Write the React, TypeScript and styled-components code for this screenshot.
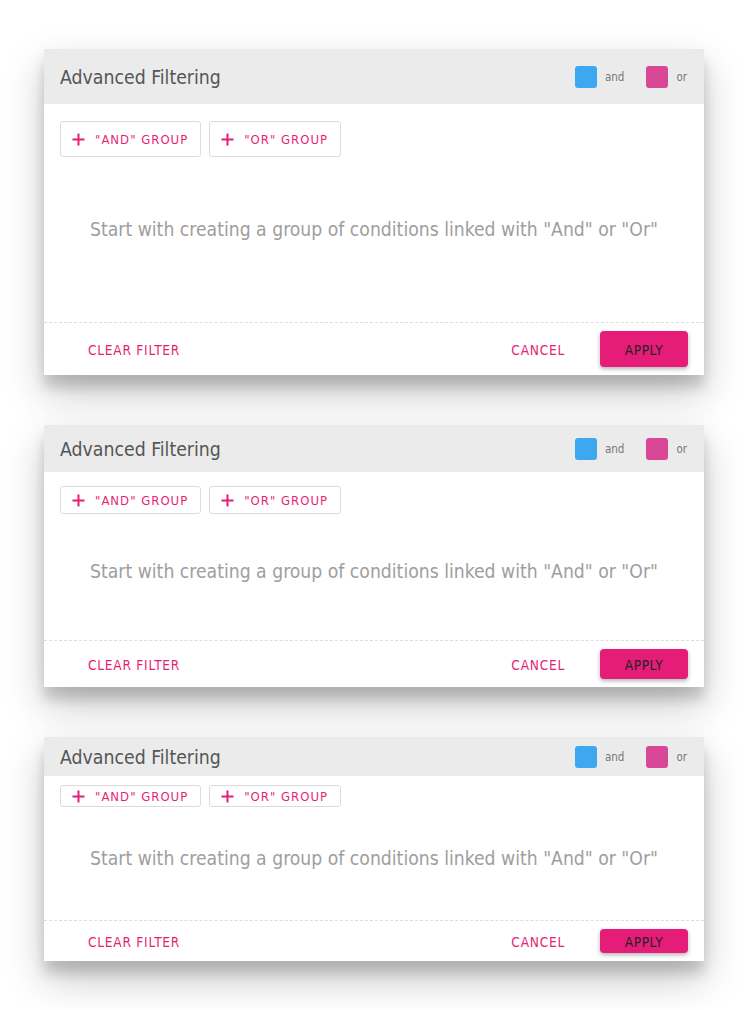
import React from "react";
import styled, { createGlobalStyle, css } from "styled-components";

const Global = createGlobalStyle`
  html, body { margin: 0; padding: 0; background: #ffffff; }
  body { font-family: "DejaVu Sans Condensed", "Liberation Sans", sans-serif; }
  * { box-sizing: border-box; }
`;

type Size = "lg" | "md" | "sm";

const sizes = {
  lg: { header: 55, btn: 36, bodyPad: 17, msgTop: 61, msgBottom: 80, footer: 53, apply: 36 },
  md: { header: 47, btn: 28, bodyPad: 14, msgTop: 46, msgBottom: 56, footer: 47, apply: 30 },
  sm: { header: 39, btn: 22, bodyPad: 9, msgTop: 40, msgBottom: 49, footer: 41, apply: 24 },
};

const Page = styled.div`
  display: flex;
  flex-direction: column;
  align-items: center;
  gap: 50px;
  padding: 49px 0 48px;
`;

const Card = styled.section`
  width: 660px;
  background: #fff;
  box-shadow: 0 18px 38px rgba(0, 0, 0, 0.22), 0 12px 12px rgba(0, 0, 0, 0.16);
`;

const Header = styled.header<{ $size: Size }>`
  height: ${(p) => sizes[p.$size].header}px;
  background: #ebebeb;
  display: flex;
  align-items: center;
  justify-content: space-between;
  padding: 1px 17px 0 16px;
`;

const Title = styled.h2`
  margin: 0;
  padding-top: 1px;
  font-size: 19.3px;
  font-weight: 400;
  color: #555;
`;

const Legend = styled.div`
  display: flex;
  align-items: center;
  gap: 8px;
`;

const Swatch = styled.span<{ $color: string }>`
  width: 22px;
  height: 22px;
  border-radius: 3px;
  background: ${(p) => p.$color};
`;

const LegendLabel = styled.span`
  font-size: 11.5px;
  color: #777;
  margin-right: 14px;
  &:last-child { margin-right: 0; }
`;

const Body = styled.div<{ $size: Size }>`
  padding: ${(p) => sizes[p.$size].bodyPad}px 16px 0;
`;

const Toolbar = styled.div`
  display: flex;
  gap: 8px;
`;

const GroupButton = styled.button<{ $size: Size }>`
  height: ${(p) => sizes[p.$size].btn}px;
  display: flex;
  align-items: center;
  gap: 10px;
  padding: 0 12px 0 11px;
  background: #fff;
  border: 1px solid #dcdcdc;
  border-radius: 3px;
  font-family: inherit;
  font-size: 13px;
  letter-spacing: 1px;
  color: #e61f74;
`;

const Message = styled.p<{ $size: Size }>`
  margin: 0;
  text-align: center;
  font-size: 19.2px;
  line-height: 24px;
  color: #9e9e9e;
  ${(p) => css`
    padding: ${sizes[p.$size].msgTop}px 0 ${sizes[p.$size].msgBottom}px;
  `}
`;

const Footer = styled.footer<{ $size: Size }>`
  height: ${(p) => sizes[p.$size].footer}px;
  border-top: 1px dashed #dedede;
  display: flex;
  align-items: flex-start;
  padding: 8px 16px 0 16px;
`;

const TextButton = styled.button<{ $size: Size }>`
  height: ${(p) => sizes[p.$size].apply}px;
  padding: 1px 35px 0 28px;
  background: none;
  border: none;
  font-family: inherit;
  font-size: 13.6px;
  letter-spacing: 0.75px;
  color: #e61f74;
`;

const Spacer = styled.div`
  flex: 1;
`;

const ApplyButton = styled.button<{ $size: Size }>`
  height: ${(p) => sizes[p.$size].apply}px;
  width: 88px;
  padding: 1px 0 0;
  background: #e51c78;
  border: none;
  border-radius: 4px;
  box-shadow: 0 2px 4px rgba(0, 0, 0, 0.3);
  font-family: inherit;
  font-size: 13.6px;
  letter-spacing: 0.6px;
  color: #222;
`;

const Plus = () => (
  <svg width="13" height="13" viewBox="0 0 13 13" aria-hidden>
    <path d="M6.5 0.5v12M0.5 6.5h12" stroke="#e61f74" strokeWidth="2" fill="none" />
  </svg>
);

const FilterCard = ({ size }: { size: Size }) => (
  <Card>
    <Header $size={size}>
      <Title>Advanced Filtering</Title>
      <Legend>
        <Swatch $color="#3da8ef" />
        <LegendLabel>and</LegendLabel>
        <Swatch $color="#d94896" />
        <LegendLabel>or</LegendLabel>
      </Legend>
    </Header>
    <Body $size={size}>
      <Toolbar>
        <GroupButton $size={size}>
          <Plus />
          "AND" GROUP
        </GroupButton>
        <GroupButton $size={size}>
          <Plus />
          "OR" GROUP
        </GroupButton>
      </Toolbar>
      <Message $size={size}>
        Start with creating a group of conditions linked with "And" or "Or"
      </Message>
    </Body>
    <Footer $size={size}>
      <TextButton $size={size}>CLEAR FILTER</TextButton>
      <Spacer />
      <TextButton $size={size}>CANCEL</TextButton>
      <ApplyButton $size={size}>APPLY</ApplyButton>
    </Footer>
  </Card>
);

export default function App() {
  return (
    <>
      <Global />
      <Page>
        <FilterCard size="lg" />
        <FilterCard size="md" />
        <FilterCard size="sm" />
      </Page>
    </>
  );
}
